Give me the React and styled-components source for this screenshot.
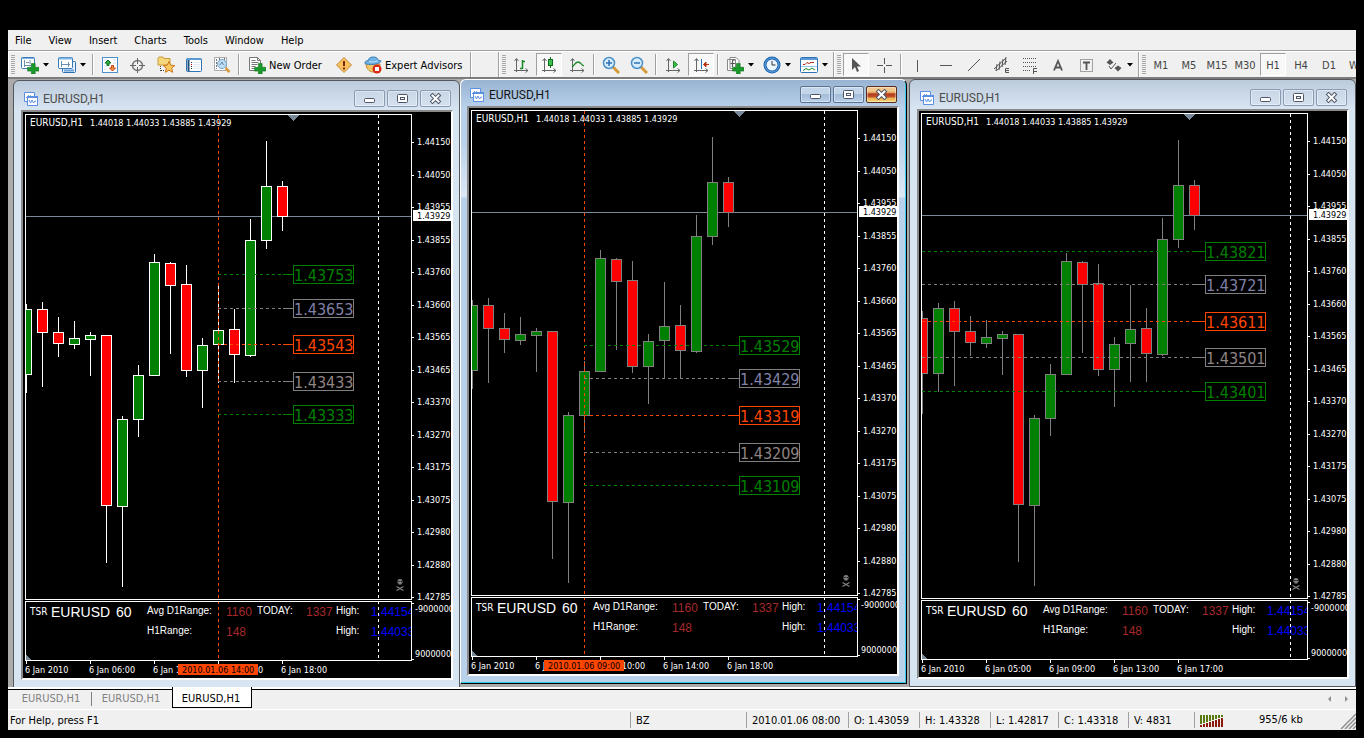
import React from 'react';
import styled, { createGlobalStyle, css } from 'styled-components';

const GlobalStyle = createGlobalStyle`
  * { box-sizing: border-box; }
  body {
    margin: 0;
    background: #000;
    font-family: "DejaVu Sans Condensed", "DejaVu Sans", sans-serif;
    font-size: 11px;
    color: #000;
  }
  button {
    font: inherit;
    color: inherit;
    background: none;
    border: none;
    padding: 0;
  }
`;

const Page = styled.div`
  min-height: 100vh;
  padding: 30px 8px 8px;
  background: #000;
`;

const Terminal = styled.div`
  background: #f0f0f0;
  overflow: hidden;
`;

const MenuBar = styled.nav`
  display: flex;
  height: 21px;
  padding: 0 0 0 7px;
  gap: 17px;
  border-bottom: 1px solid #a0a0a0;
`;

const MenuButton = styled.button`
  line-height: 20px;
  padding-top: 1px;
`;

const Toolbar = styled.div`
  display: flex;
  height: 28px;
  border-top: 1px solid #fff;
  border-bottom: 2px solid #7c7c7c;
  overflow: hidden;
`;

const ToolGroup = styled.div`
  display: flex;
  flex: none;
  align-items: center;
  padding-right: ${(p) => p.$end || 0}px;
  min-width: 28px;
  border-right: 1px solid #a0a0a0;
  box-shadow: inset 1px 0 #fff;
  &:last-child { border-right: none; }
`;

const Grip = styled.span`
  width: 4px;
  height: 20px;
  margin: 0 1px 0 3px;
  background: repeating-linear-gradient(#a8a8a8 0 1px, #f0f0f0 1px 2px);
`;

const Separator = styled.span`
  width: 2px;
  height: 21px;
  margin: 0 2px;
  border-left: 1px solid #a0a0a0;
  border-right: 1px solid #fff;
`;

const ToolButton = styled.button`
  display: flex;
  flex: none;
  align-items: center;
  justify-content: center;
  gap: 4px;
  width: ${(p) => p.$w || 28}px;
  height: 23px;
  white-space: nowrap;
  color: ${(p) => (p.$dim ? '#444' : '#000')};
  ${(p) => p.$text && css`
    justify-content: flex-start;
    padding-left: 6px;
    gap: 3px;
  `}
  ${(p) => p.$pressed && css`
    width: 26px;
    margin: 0 1px;
    background: #f8f8f8;
    border: 1px solid #fff;
    border-top-color: #a0a0a0;
    border-left-color: #a0a0a0;
  `}
  svg { flex: none; }
`;

const ToolLabel = styled.span`
  padding-top: 2px;
`;

const Workspace = styled.main`
  display: flex;
  align-items: flex-start;
  height: 608px;
  padding-left: 5px;
  background: #ababab;
  overflow: hidden;
`;

const Frame = styled.section`
  flex: 1 0 447px;
  padding: 0 6px 7px 7px;
  border: 1px solid #53585f;
  border-radius: 6px 6px 0 0;
  background: linear-gradient(#bccbdb, #d7e4f2 28px);
  &:first-child { margin-top: 1px; }
  &:last-child { margin-left: 2px; }
  ${(p) => p.$active && css`
    padding: 0 7px 7px 6px;
    border-color: #fff #000 #000 #fff;
    box-shadow: inset -1px -1px #35c7e6;
    background: linear-gradient(#98b4d2, #b9d1ea 28px, #b9d1ea 60px, #dce8f5 117px, #b9d1ea 118px);
  `}
`;

const TitleBar = styled.header`
  display: flex;
  align-items: flex-end;
  height: ${(p) => (p.$active ? 26 : 29)}px;
  padding: 0 2px 3px 3px;
`;

const Title = styled.h2`
  flex: 1;
  margin: 0 0 0 5px;
  font: 12px/15px Roboto, sans-serif;
  color: ${(p) => (p.$active ? '#141414' : '#4c4c4c')};
`;

const FrameButtons = styled.div`
  display: flex;
  gap: 2px;
`;

const FrameButton = styled.button`
  display: flex;
  align-items: center;
  justify-content: center;
  width: 31px;
  height: 17px;
  border: 1px solid ${(p) => (p.$active ? '#5b7392' : '#8b9bb4')};
  border-radius: 2px;
  background: ${(p) => (p.$active ? 'linear-gradient(#c3d5e9 50%, #a3bcd8 50%, #b9d1ea)' : 'linear-gradient(#c9d6e5, #d5e1ef)')};
  box-shadow: inset 0 0 0 1px rgba(255, 255, 255, .4);
  ${(p) => p.$close && css`
    border-color: #5a2c1c;
    background: linear-gradient(#f0c890 0 25%, #e39b4e 40%, #b03a20 45%, #c0502a 65%, #ecb04c 75%, #f8d878);
  `}
`;

const Sunken = styled.div`
  background: #000;
  border: 2px solid #fff;
  border-top-color: #8a8a8a;
  border-left-color: #8a8a8a;
  svg { display: block; }
`;

const TabStrip = styled.div`
  display: flex;
  align-items: flex-start;
  height: 23px;
  padding: 0 0 0 4px;
  background: linear-gradient(#fff 2px, #000 2px 3px, #f0f0f0 3px);
  border-bottom: 1px solid #fff;
`;

const Tab = styled.button`
  width: 80px;
  height: 21px;
  padding: 2px 2px 0 0;
  color: #808080;
  background: linear-gradient(#808080, #808080) right 5px / 1px 14px no-repeat;
  & + & { background: none; }
  ${(p) => p.$current && css`
    && {
      color: #000;
      background: #fff;
      border: 1px solid #000;
      border-top: none;
    }
  `}
`;

const TabScroll = styled.div`
  display: flex;
  gap: 12px;
  margin-left: auto;
  padding: 8px 7px 0 0;
  button { display: flex; }
`;

const StatusBar = styled.footer`
  display: flex;
  align-items: center;
  height: 20px;
  line-height: 20px;
`;

const StatusCell = styled.div`
  flex: none;
  display: flex;
  align-items: center;
  width: ${(p) => p.$w}px;
  height: 16px;
  padding: 2px 0 0 5px;
  border-left: 1px solid #a0a0a0;
  white-space: nowrap;
`;

const HelpText = styled.div`
  flex: 1;
  padding: 2px 0 0 2px;
`;

const Traffic = styled.div`
  display: flex;
  justify-content: space-between;
  align-items: flex-end;
  width: 97px;
  line-height: 18px;
`;

const Caret = () => (
  <svg width="6" height="4"><path d="M0 0h6L3 3.5z" fill="#000" /></svg>
);

const Icon = ({ children }) => (
  <svg width="18" height="18" viewBox="0 0 18 18" fill="none">{children}</svg>
);

const Plus = () => (
  <path d="M10 7h4v4h4v4h-4v3h-4v-3H6v-4h4z" transform="translate(1 1) scale(.94)" fill="#1b9a2c" stroke="#0c6b1a" strokeWidth=".6" />
);

const Axes = () => (
  <path d="M4.5 3v13M2 14.5h14M2.5 5l2-2.5 2 2.5M13.5 12.5l2.5 2-2.5 2" stroke="#666" />
);

const icons = {
  newChart: (
    <Icon>
      <rect x=".5" y="1.5" width="13" height="11" rx="1" fill="#fff" stroke="#3a7ab8" />
      <path d="M1 2.5h12" stroke="#7db4e4" />
      <path d="M3.5 4v7M3 9.5h9M5 6.5h3M9 4v4" stroke="#6f8fae" />
      <Plus />
    </Icon>
  ),
  profiles: (
    <Icon>
      <rect x="4.5" y="5.5" width="13" height="11" rx="1" fill="#e6f1fb" stroke="#2e6fb0" />
      <rect x=".5" y="1.5" width="14" height="11" rx="1" fill="#fff" stroke="#3a7ab8" />
      <path d="M1 2.5h13" stroke="#7db4e4" strokeWidth="2" />
      <path d="M3.5 5v6M3 8.5h9M10.5 6v5" stroke="#6f8fae" />
      <path d="M6 14.5h10" stroke="#6ba3d8" strokeWidth="2" />
    </Icon>
  ),
  market: (
    <Icon>
      <rect x="1.5" y="1.5" width="15" height="15" fill="#fff" stroke="#4a90cc" />
      <path d="M3 4h3M3 7h3M3 10h3M3 13h3M12 4h3M12 7h3" stroke="#cfe0ee" />
      <path d="M4 7l3-3 3 3H8v2.500H6V7z" fill="#30b040" stroke="#107020" />
      <path d="M8.500 12l3 3 3-3h-2V9.500h-2V12z" fill="#f89050" stroke="#c84810" />
    </Icon>
  ),
  dataWindow: (
    <Icon>
      <circle cx="8.5" cy="9.5" r="5" stroke="#777" strokeWidth="1.5" />
      <path d="M8.500 2v6M8.500 11v6M1 9.500h6M10 9.500h6" stroke="#666" />
    </Icon>
  ),
  navigator: (
    <Icon>
      <path d="M1 9V2.500L2 1h4l1 1.500h6V9z" fill="#f6d87c" stroke="#c99a38" />
      <path d="M3.500 10v5M4 14.500h3" stroke="#444" strokeDasharray="1 1" />
      <path d="M12 5.500l1.700 3.700 4 .4-3 2.600.9 4.100L12 14.200l-3.600 2.100.9-4.100-3-2.600 4-.4z" fill="#fcc860" stroke="#c87818" />
    </Icon>
  ),
  terminal: (
    <Icon>
      <rect x="1.5" y="2.5" width="15" height="13" rx="1" fill="#fff" stroke="#2f72b4" />
      <path d="M2 3h14" stroke="#5a9ad4" strokeWidth="2" />
      <path d="M3.500 4v11" stroke="#24507c" strokeWidth="2" />
      <path d="M6 6.500h1M6 10.500h1M6 12.500h1" stroke="#333" />
      <path d="M6 8.500h1" stroke="red" />
      <path d="M8 6.500h7M8 8.500h7M8 10.500h7M8 12.500h7" stroke="#dfe9f2" />
    </Icon>
  ),
  tester: (
    <Icon>
      <path d="M1.500 1.500h12v13h-12z" fill="#fff" stroke="#aaa" />
      <path d="M3.500 3v10M6.500 2v10M11.500 2v8" stroke="#777" strokeDasharray="2 1" />
      <circle cx="9" cy="8" r="4.5" fill="#b9dcf4" fillOpacity=".85" stroke="#6fa3c8" />
      <path d="M7 9l2-3 1.500 3" stroke="#5a86a8" />
      <path d="M12.500 12l4 4" stroke="#d79a38" strokeWidth="2.5" />
    </Icon>
  ),
  newOrder: (
    <Icon>
      <path d="M1.500 1.500h8l3 3v10h-11z" fill="#fff" stroke="#777" />
      <path d="M9.500 1.500v3h3M3.500 4.500h4M3.500 6.500h7M3.500 8.500h6M3.500 10.500h4M3.500 12.500h3" stroke="#777" />
      <Plus />
    </Icon>
  ),
  alert: (
    <Icon>
      <path d="M9 1.500L16.500 9 9 16.500 1.500 9z" fill="#f8c060" stroke="#c98a30" strokeLinejoin="round" />
      <path d="M9 5v5M9 11.500v2" stroke="#7a2800" strokeWidth="2" />
    </Icon>
  ),
  expert: (
    <Icon>
      <path d="M2 8c0 4 3 8 7 8s7-4 7-8z" fill="#f4c468" stroke="#c48a30" />
      <path d="M1 7.500C4 9 14 9 17 5.500c0-1.500-2-1-3-1C14 2 12 1 9 1S4.500 2.500 4.500 4.500C2 4.500.5 6 1 7.500z" fill="#6fb2e4" stroke="#3a7db4" />
      <path d="M5 5.500c3 .8 6 .6 9-.8" stroke="#c5e2f7" />
      <circle cx="13" cy="13" r="4.5" fill="#d92a14" />
      <rect x="11" y="11" width="4" height="4" fill="#fff" />
    </Icon>
  ),
  bars: <Icon><Axes /><path d="M10.500 4v9M8 12.500h2.500M10.500 5.500H13" stroke="#178a26" strokeWidth="1.5" /></Icon>,
  candles: (
    <Icon>
      <Axes />
      <path d="M10.500 1v11" stroke="#0d6b1a" />
      <rect x="8.5" y="3.5" width="4" height="6" fill="#3cc04c" stroke="#0d6b1a" />
    </Icon>
  ),
  line: <Icon><Axes /><path d="M4 11c2-1 3-5 6-5s3 3 6 4" stroke="#178a26" strokeWidth="1.3" /></Icon>,
  zoomIn: (
    <Icon>
      <path d="M11 11l6 6" stroke="#d79a38" strokeWidth="3" />
      <circle cx="7" cy="7" r="5.5" fill="#d6ecfa" stroke="#4b8fc8" strokeWidth="1.5" />
      <path d="M7 4v6M4 7h6" stroke="#2f72b4" strokeWidth="1.5" />
    </Icon>
  ),
  zoomOut: (
    <Icon>
      <path d="M11 11l6 6" stroke="#d79a38" strokeWidth="3" />
      <circle cx="7" cy="7" r="5.5" fill="#d6ecfa" stroke="#4b8fc8" strokeWidth="1.5" />
      <path d="M4 7h6" stroke="#2f72b4" strokeWidth="1.5" />
    </Icon>
  ),
  scroll: <Icon><Axes /><path d="M9.500 5l4 3.500-4 3.500z" fill="#3cc04c" stroke="#178a26" /></Icon>,
  shift: (
    <Icon>
      <Axes />
      <path d="M9.500 3v10" stroke="#2f72b4" />
      <path d="M17 8.500h-5M14 6l-2.500 2.500L14 11z" fill="#d93a14" stroke="#b83010" />
    </Icon>
  ),
  indicators: (
    <Icon>
      <path d="M1.500 3.500h8v11h-8zM4 1.500h6l3 3v8H4z" fill="#fff" stroke="#888" />
      <path d="M9 4c-2-.5-2.500 0-2.500 2v5M4.500 7.500H9" stroke="#555" strokeWidth="1.2" />
      <Plus />
    </Icon>
  ),
  clock: (
    <Icon>
      <circle cx="9" cy="9" r="7" fill="#eaf5fd" stroke="#1e64b0" strokeWidth="3" />
      <circle cx="9" cy="9" r="7" stroke="#5fa4e4" />
      <path d="M9 5v4h3.500" stroke="#333" />
    </Icon>
  ),
  template: (
    <Icon>
      <rect x=".5" y="1.5" width="17" height="15" rx="1" fill="#fff" stroke="#2f72b4" />
      <path d="M1 3h16" stroke="#5a9ad4" strokeWidth="2" />
      <path d="M3 8.500h2l2-2 2 1 2-1h3" stroke="#b02a1a" />
      <path d="M1 10.500h16" stroke="#9cc4e8" />
      <path d="M3 14.500l3-2 3 1.500 3-2 3 2" stroke="#178a26" />
    </Icon>
  ),
  cursor: <Icon><path d="M5 2v12l3-3 2 5 2-1-2-4.500h4z" fill="#555" /></Icon>,
  cross: <Icon><path d="M9.500 2v6M9.500 11v6M2 9.500h6M11 9.500h6" stroke="#555" /></Icon>,
  vline: <Icon><path d="M8.500 4v12" stroke="#555" /></Icon>,
  hline: <Icon><path d="M3 9.500h12" stroke="#555" /></Icon>,
  trend: <Icon><path d="M3 15L15 3" stroke="#555" /></Icon>,
  channel: (
    <Icon>
      <path d="M1 13L13 2M3 15L14 5M4 8l-1 7M7 5.500L6 14M10 3L9 11M13 1l-1 8" stroke="#555" />
      <path d="M16 12.500h-3.500v4H16M12.500 14.500H16" stroke="#555" />
    </Icon>
  ),
  fibo: (
    <Icon>
      <path d="M2 2.500h14M2 6.500h14M2 10.500h14M2 14.500h8" stroke="#555" strokeDasharray="1 1" />
      <path d="M16 12.500h-3.500V18M12.500 15.500H16" stroke="#555" />
    </Icon>
  ),
  text: <Icon><path d="M5 14.500L9 5l4 9.500M6.500 11.500h5" stroke="#555" strokeWidth="1.8" /></Icon>,
  label: (
    <Icon>
      <rect x="3.5" y="3.5" width="12" height="12" stroke="#555" strokeDasharray="1 1" />
      <path d="M6 6.500h7M9.500 6.500V14" stroke="#555" strokeWidth="1.8" />
    </Icon>
  ),
  arrows: (
    <Icon>
      <path d="M5 3l3.500 3.500L5 9 1.500 6.500zM13 9.500l3.500 2.500-3.500 3.500L9.500 12z" fill="#555" />
      <path d="M4 10l2 3 5-6" stroke="#555" />
    </Icon>
  ),
  frame: (
    <svg width="14" height="15" viewBox="0 0 14 15" fill="none">
      <path d="M.5.5h10v9H.5z" fill="#fff" stroke="#5b8fe6" />
      <path d="M2 5.500h1.500l1-2 1 2 1-2 1 2H9" stroke="#5b8fe6" />
      <path d="M3.500 4.500h10v9h-10z" fill="#fff" stroke="#5b8fe6" />
      <path d="M3 5h11" stroke="#5b8fe6" strokeWidth="2" />
      <path d="M5 8l1.500 3L8 8l1.500 3L11 9h1" stroke="#5b8fe6" />
    </svg>
  )
};

// [x, high, body top, body bottom, low, rising]
const candles = [
  [10, 312, 319, 374, 415, false],
  [26, 304, 309, 374, 393, true],
  [42, 302, 309, 332, 387, false],
  [58, 317, 332, 343, 357, false],
  [74, 321, 338, 344, 349, true],
  [90, 332, 335, 339, 376, true],
  [106, 335, 335, 505, 563, false],
  [122, 416, 419, 506, 587, true],
  [138, 365, 375, 419, 437, true],
  [154, 254, 262, 375, 375, true],
  [170, 262, 263, 285, 354, false],
  [186, 265, 284, 370, 377, false],
  [202, 338, 345, 370, 408, true],
  [218, 286, 330, 344, 383, true],
  [234, 309, 329, 354, 383, false],
  [250, 219, 240, 355, 357, true],
  [266, 141, 186, 240, 249, true],
  [282, 181, 186, 216, 231, false]
];

const prices = [
  '1.44150', '1.44050', '1.43955', '1.43855', '1.43760', '1.43660', '1.43565', '1.43465',
  '1.43370', '1.43270', '1.43175', '1.43075', '1.42980', '1.42880', '1.42785'
];

const levelColors = [
  ['#008000', '#008000'],
  ['#808080', '#8080a8'],
  ['#ff4500', '#ff4500'],
  ['#808080', '#908484'],
  ['#008000', '#008000']
];

const charts = [
  {
    id: 'left',
    outline: '#fff',
    shift: 0,
    cursor: { x: 218, time: '2010.01.06 14:00' },
    dayEnd: 378,
    labelX: 293,
    start: 218,
    levels: [[274, '1.43753'], [308, '1.43653'], [344, '1.43543'], [381, '1.43433'], [414, '1.43333']],
    times: ['6 Jan 2010', '6 Jan 06:00', '6 Jan 10:00', '6 Jan 14:00', '6 Jan 18:00']
  },
  {
    id: 'middle',
    active: true,
    outline: '#808080',
    shift: 0,
    cursor: { x: 138, time: '2010.01.06 09:00' },
    dayEnd: 378,
    labelX: 293,
    start: 138,
    levels: [[349, '1.43529'], [382, '1.43429'], [419, '1.43319'], [456, '1.43209'], [489, '1.43109']],
    times: ['6 Jan 2010', '6 Jan 06:00', '6 Jan 10:00', '6 Jan 14:00', '6 Jan 18:00']
  },
  {
    id: 'right',
    outline: '#808080',
    shift: 16,
    dayEnd: 394,
    labelX: 309,
    start: 26,
    levels: [[252, '1.43821'], [285, '1.43721'], [322, '1.43611'], [358, '1.43501'], [392, '1.43401']],
    times: ['6 Jan 2010', '6 Jan 05:00', '6 Jan 09:00', '6 Jan 13:00', '6 Jan 17:00']
  }
];

const ChartSvg = styled.svg`
  font-family: "DejaVu Sans Condensed", "DejaVu Sans", sans-serif;
  font-size: 9px;
  fill: #fff;
  .crisp { shape-rendering: crispEdges; }
  .symbol { font-size: 10px; }
  .level { font-size: 16px; }
  .range { font-family: "Liberation Sans", Arial, sans-serif; font-size: 10px; }
  .pair { font-family: "Liberation Sans", Arial, sans-serif; font-size: 14px; }
  .value { font-family: "Liberation Sans", Arial, sans-serif; font-size: 12px; }
`;

function Chart({ chart }) {
  const { id, outline, shift, cursor, dayEnd, labelX, start, levels, times } = chart;
  return (
    <ChartSvg width="428" height="566" viewBox="23 112 428 566">
      <clipPath id={`plot-${id}`}><rect x="26" y="115" width="385" height="545" /></clipPath>
      <g className="crisp" clipPath={`url(#plot-${id})`}>
        <path d="M26 216.500H411" stroke="#778899" />
        {candles.map(([x, high, top, bottom, low, up]) => (
          <g key={x} stroke={outline}>
            <path d={`M${x + shift + 0.5} ${high}V${low}`} />
            <rect x={x + shift - 4.5} y={top + 0.5} width="10" height={bottom - top} fill={up ? '#008000' : '#f00'} />
          </g>
        ))}
        {cursor && <path d={`M${cursor.x + 0.5} 115V660`} stroke="#ff4500" strokeDasharray="3 3" />}
        <path d={`M${dayEnd + 0.5} 115V660`} stroke="#fff" strokeDasharray="3 3" />
        <path d="M288 115h11l-5.500 6z" fill="#778899" />
        <path d="M26 655l6 5h-6z" fill="#778899" />
      </g>
      {levels.map(([y, price], i) => (
        <g key={price}>
          <g className="crisp" stroke={levelColors[i][0]} fill="none">
            <path d={`M${start} ${y + 0.5}H${labelX - 10}`} strokeDasharray="3 3" />
            <path d={`M${labelX - 10} ${y + 0.5}h10`} />
            <rect x={labelX + 0.5} y={y - 8.5} width="60" height="18" />
          </g>
          <text className="level" x={labelX + 1} y={y + 7} fill={levelColors[i][1]}>{price}</text>
        </g>
      ))}
      <text className="symbol" x="30" y="126">EURUSD,H1</text>
      {['1.44018', '1.44033', '1.43885', '1.43929'].map((value, i) => (
        <text key={value} x={90 + i * 36} y="126">{value}</text>
      ))}

      <g className="crisp" fill="none" stroke="#fff">
        <rect x="25.5" y="114.5" width="386" height="485" />
        <rect x="25.5" y="601.5" width="386" height="59" />
        <path d="M412 603.500h2M412 659.500h2" />
        {prices.map((p, i) => <path key={p} d={`M412 ${Math.floor(142.5 + i * 32.5) + 0.5}h2`} />)}
        {times.map((t, i) => <path key={t} d={`M${26.5 + i * 64} 661v3`} />)}
      </g>
      {prices.map((p, i) => (
        <text key={p} x="417" y={Math.floor(145.5 + i * 32.5)}>{p}</text>
      ))}
      <rect x="413" y="210" width="38" height="11" />
      <text x="417" y="219" fill="#000">1.43929</text>
      <text x="415" y="612">-9000000</text>
      <text x="415" y="657">90000000</text>

      <g clipPath={`url(#plot-${id})`}>
        <text className="symbol" x="30" y="615">TSR</text>
        <text className="pair" x="51" y="617">EURUSD</text>
        <text className="pair" x="116" y="617">60</text>
        <g className="range">
          <text x="147" y="614">Avg D1Range:</text>
          <text x="147" y="634">H1Range:</text>
          <text x="257" y="614">TODAY:</text>
          <text x="336" y="614">High:</text>
          <text x="336" y="634">High:</text>
        </g>
        <g className="value" fill="#a52a2a">
          <text x="226" y="616">1160</text>
          <text x="226" y="636">148</text>
          <text x="306" y="616">1337</text>
        </g>
        <g className="value" fill="#00f">
          <text x="371" y="616">1.44154</text>
          <text x="371" y="636">1.44033</text>
        </g>
        <g stroke="#808080" fill="none">
          <path d="M396.500 586.500l7 4M403.500 586.500l-7 4" strokeWidth="1.3" />
          <path d="M397.500 581q0-2 2.500-2t2.500 2v2l-1 .5v1h-3v-1l-1-.5z" fill="#808080" stroke="none" />
          <path d="M398.300 581.500h1.200M400.700 581.500h1.200" stroke="#000" />
        </g>
      </g>

      {times.map((t, i) => <text key={t} x={25 + i * 64} y="673">{t}</text>)}
      {cursor && (
        <>
          <rect x={cursor.x - 40} y="664" width="80" height="11" fill="#ff4500" />
          <text x={cursor.x - 36} y="673" fill="#000">{cursor.time}</text>
        </>
      )}
    </ChartSvg>
  );
}

function ChartWindow({ chart }) {
  const { active } = chart;
  const ink = { fill: '#fff', stroke: '#4d5566' };
  return (
    <Frame $active={active}>
      <TitleBar $active={active}>
        {icons.frame}
        <Title $active={active}>EURUSD,H1</Title>
        <FrameButtons>
          <FrameButton $active={active} aria-label="Minimize">
            <svg width="12" height="11"><rect x=".5" y="5.5" width="10" height="4" rx="1" {...ink} /></svg>
          </FrameButton>
          <FrameButton $active={active} aria-label="Restore">
            <svg width="12" height="11">
              <rect x=".5" y="1.5" width="10" height="8" rx="1" {...ink} />
              <rect x="3.5" y="4.5" width="4" height="2" {...ink} />
            </svg>
          </FrameButton>
          <FrameButton $active={active} $close={active} aria-label="Close">
            <svg width="12" height="11" fill="none" strokeLinecap="square">
              <path d="M2.500 2.500l6 6M8.500 2.500l-6 6" stroke="#4d5566" strokeWidth="4" />
              <path d="M2.500 2.500l6 6M8.500 2.500l-6 6" stroke="#fff" strokeWidth="2" />
            </svg>
          </FrameButton>
        </FrameButtons>
      </TitleBar>
      <Sunken><Chart chart={chart} /></Sunken>
    </Frame>
  );
}

function Tool({ icon, caret, pressed }) {
  return (
    <ToolButton $w={caret ? 37 : 28} $pressed={pressed} aria-label={icon}>
      {icons[icon]}
      {caret && <Caret />}
    </ToolButton>
  );
}

const SignalBars = () => (
  <svg width="24" height="13">
    {Array.from({ length: 8 }, (_, i) => (
      <g key={i}>
        <rect x={i * 3} y="0" width="2" height={9 - i} fill="#5a7a10" />
        <rect x={i * 3} y={10 - i} width="2" height={i + 2} fill="#8b1a0a" />
      </g>
    ))}
  </svg>
);

function App() {
  return (
    <Page>
      <GlobalStyle />
      <Terminal>
        <MenuBar>
          {['File', 'View', 'Insert', 'Charts', 'Tools', 'Window', 'Help'].map((item) => (
            <MenuButton key={item}>{item}</MenuButton>
          ))}
        </MenuBar>

        <Toolbar>
          <ToolGroup>
            <Grip />
            <Tool icon="newChart" caret />
            <Tool icon="profiles" caret />
            <Separator />
            <Tool icon="market" />
            <Tool icon="dataWindow" />
            <Tool icon="navigator" />
            <Tool icon="terminal" />
            <Tool icon="tester" />
            <Separator />
            <ToolButton $w={88} $text>{icons.newOrder}<ToolLabel>New Order</ToolLabel></ToolButton>
            <Tool icon="alert" />
            <ToolButton $w={112} $text>{icons.expert}<ToolLabel>Expert Advisors</ToolLabel></ToolButton>
          </ToolGroup>
          <ToolGroup />
          <ToolGroup $end={1}>
            <Grip />
            <Tool icon="bars" />
            <Tool icon="candles" pressed />
            <Tool icon="line" />
            <Separator />
            <Tool icon="zoomIn" />
            <Tool icon="zoomOut" />
            <Separator />
            <Tool icon="scroll" />
            <Tool icon="shift" pressed />
            <Separator />
            <Tool icon="indicators" caret />
            <Tool icon="clock" caret />
            <Tool icon="template" caret />
          </ToolGroup>
          <ToolGroup $end={1}>
            <Grip />
            <Tool icon="cursor" pressed />
            <Tool icon="cross" />
            <Separator />
            <Tool icon="vline" />
            <Tool icon="hline" />
            <Tool icon="trend" />
            <Tool icon="channel" />
            <Tool icon="fibo" />
            <Tool icon="text" />
            <Tool icon="label" />
            <Tool icon="arrows" caret />
          </ToolGroup>
          <ToolGroup>
            <Grip />
            {['M1', 'M5', 'M15', 'M30', 'H1', 'H4', 'D1', 'W1'].map((period) => (
              <ToolButton key={period} $dim $pressed={period === 'H1'}>
                <ToolLabel>{period}</ToolLabel>
              </ToolButton>
            ))}
          </ToolGroup>
        </Toolbar>

        <Workspace>
          {charts.map((chart) => <ChartWindow key={chart.id} chart={chart} />)}
        </Workspace>

        <TabStrip>
          <Tab>EURUSD,H1</Tab>
          <Tab>EURUSD,H1</Tab>
          <Tab $current>EURUSD,H1</Tab>
          <TabScroll>
            <button aria-label="Previous"><svg width="5" height="8"><path d="M4 1v6L1 4z" fill="#909090" /></svg></button>
            <button aria-label="Next"><svg width="5" height="8"><path d="M1 1v6l3-3z" fill="#909090" /></svg></button>
          </TabScroll>
        </TabStrip>

        <StatusBar>
          <HelpText>For Help, press F1</HelpText>
          <StatusCell $w={116}>BZ</StatusCell>
          <StatusCell $w={102}>2010.01.06 08:00</StatusCell>
          <StatusCell $w={71}>O: 1.43059</StatusCell>
          <StatusCell $w={71}>H: 1.43328</StatusCell>
          <StatusCell $w={68}>L: 1.42817</StatusCell>
          <StatusCell $w={70}>C: 1.43318</StatusCell>
          <StatusCell $w={66}>V: 4831</StatusCell>
          <StatusCell $w={65}><SignalBars /></StatusCell>
          <Traffic>
            955/6 kb
            <svg width="16" height="18">
              <path d="M1 18L16 3M5 18L16 7M9 18l7-7M13 18l3-3" stroke="#909090" strokeWidth="1.5" />
            </svg>
          </Traffic>
        </StatusBar>
      </Terminal>
    </Page>
  );
}

export default App;
